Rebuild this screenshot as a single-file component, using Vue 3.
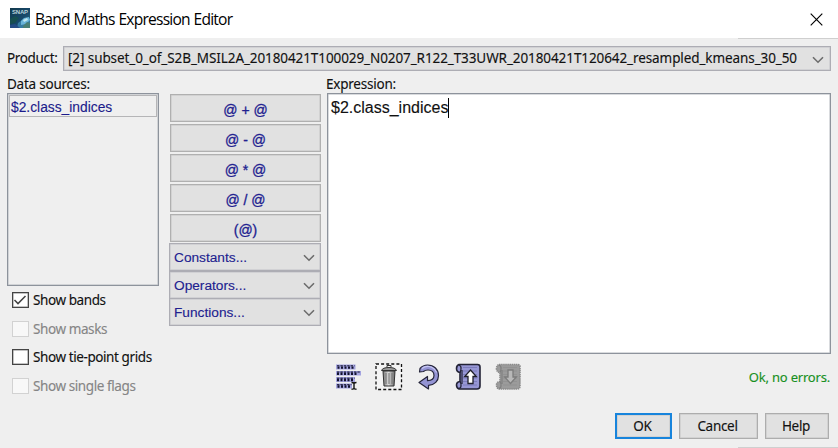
<script setup>
import { ref } from 'vue'

const product = ref('[2] subset_0_of_S2B_MSIL2A_20180421T100029_N0207_R122_T33UWR_20180421T120642_resampled_kmeans_30_50')
const expression = ref('$2.class_indices')
const operations = ['@ + @', '@ - @', '@ * @', '@ / @', '(@)']
const menus = ['Constants...', 'Operators...', 'Functions...']
const options = [
  { label: 'Show bands', checked: true, disabled: false },
  { label: 'Show masks', checked: false, disabled: true },
  { label: 'Show tie-point grids', checked: false, disabled: false },
  { label: 'Show single flags', checked: false, disabled: true },
]
</script>

<template>
  <div class="dialog">
    <header class="titlebar">
      <svg class="logo" width="20" height="20" viewBox="0 0 20 20">
        <defs>
          <linearGradient id="sky" x1="0" y1="0" x2="1" y2="1">
            <stop offset="0" stop-color="#123a4c" />
            <stop offset=".55" stop-color="#17486b" />
            <stop offset="1" stop-color="#356f80" />
          </linearGradient>
        </defs>
        <rect width="20" height="20" fill="url(#sky)" />
        <path d="M0 11l5-3 4 2-4 5-5 1z" fill="#174f50" />
        <path d="M8 15l7-5 5 1v9H7z" fill="#347ba3" />
        <path d="M11 13l3-3 5-1 1 3-4 4-5 1z" fill="#69b4d9" />
        <path d="M13 12l4-2 1 2-4 2z" fill="#c1e6ef" />
        <path d="M0 17l5-1 5 4H0z" fill="#244c85" />
        <path d="M13 18l4-4 3 1v5h-7z" fill="#487f75" />
        <text x="2" y="5.5" class="logo-text" textLength="16">SNAP</text>
      </svg>
      <h1>Band Maths Expression Editor</h1>
      <svg class="close" width="13" height="13" viewBox="0 0 13 13">
        <path d="M.7.7l11.6 11.6M12.3.7L.7 12.3" stroke="#000" stroke-width="1.15" />
      </svg>
    </header>
    <div class="top-edge"></div>

    <div class="product">
      <span class="product-label">Product:</span>
      <div class="combo product-combo">
        <span class="product-name">{{ product }}</span>
        <svg class="chevron" width="12" height="8" viewBox="0 0 12 8"><path d="M1 1.2l5 5 5-5" /></svg>
      </div>
    </div>

    <main class="columns">
      <section class="sources">
        <div class="caption">Data sources:</div>
        <div class="list"><div class="list-item">{{ expression }}</div></div>
        <div class="checks">
          <label v-for="o in options" :key="o.label" class="check" :class="{ disabled: o.disabled }">
            <span class="box">
              <svg v-if="o.checked" width="14" height="14" viewBox="0 0 14 14"><path d="M1.5 7l3.5 3.6L12.5 3" fill="none" stroke="#444" stroke-width="1.5" /></svg>
            </span>
            <span class="check-text">{{ o.label }}</span>
          </label>
        </div>
      </section>

      <section class="operators">
        <button v-for="op in operations" :key="op" class="op">{{ op }}</button>
        <div v-for="m in menus" :key="m" class="combo menu">
          <span>{{ m }}</span>
          <svg class="chevron" width="12" height="8" viewBox="0 0 12 8"><path d="M1 1.2l5 5 5-5" /></svg>
        </div>
      </section>

      <section class="editor">
        <div class="caption">Expression:</div>
        <div class="code"><span>{{ expression }}</span><i class="caret"></i></div>
        <div class="tools">
          <div class="icons">
            <svg width="28" height="28" viewBox="0 0 28 28">
              <path d="M1 1.5h19.5v5H1zM1 8h25v4.500H1zM1 14h19v5H1zM1 20.500h16v5H1z" fill="#a4a4e0" />
              <g fill="none" stroke="#11112b">
                <path d="M2 2.800h17.500M2 9h23M2 15.200h17.500M2 21.700h14.500" stroke-width="1" stroke-dasharray="2.400 1" />
                <path d="M2.500 4.600h17M2 10.800h20M2 17h17.500M2.500 23.500h14" stroke-width="2.400" stroke-dasharray="2 1.500" />
              </g>
              <path d="M16.500 19.500q2 0 2.500 1 .5-1 2.500-1M19 20.500v5M16.500 26.200q2 0 2.500-1 .5 1 2.500 1" fill="none" stroke="#111" stroke-width="1.400" />
            </svg>
            <svg width="28" height="28" viewBox="0 0 28 28">
              <defs>
                <linearGradient id="metal"><stop stop-color="#777" /><stop offset=".45" stop-color="#ddd" /><stop offset="1" stop-color="#666" /></linearGradient>
              </defs>
              <rect x="1" y="1" width="25.500" height="25.500" fill="#f4f4f4" stroke="#111" stroke-width="1.300" stroke-dasharray="3 2.100" />
              <path d="M8 8h12l-1 15H9z" fill="url(#metal)" stroke="#333" />
              <path d="M11 10v11M14 10v11M17 10v11" stroke="#777" stroke-width="1.100" />
              <path d="M6.500 7.500q1-3 7.500-3t7.500 3z" fill="#999" stroke="#333" />
              <path d="M12 4V2.500h4V4" fill="none" stroke="#333" />
            </svg>
            <svg width="28" height="28" viewBox="0 0 28 28">
              <path d="M5 5.500Q8 2 12.500 2C19 2 23.500 6.500 23.500 12.500c0 5.500-4 9.500-10 9.800V26L4 19.500l8.500-6v4.200c4-.2 6.500-2.200 6.500-5.200 0-3.500-2.500-5.500-6-5.500-2 0-3.500.5-4.500 1.500L4.500 9Z" fill="#9494d4" stroke="#25253a" stroke-width="1.200" stroke-linejoin="round" />
              <path d="M7 5.500q3-2.500 7-2 5.500 1 7.500 6" fill="none" stroke="#c7c7f3" stroke-width="1.100" />
            </svg>
            <svg v-for="dir in ['up', 'down']" :key="dir" :class="dir" width="28" height="28" viewBox="0 0 28 28">
              <path class="sheet" d="M4 1.500h18.500q2.500 0 2.500 2.500v19q0 3-3 3H4q-2.500-1-2.500-4Q1.500 19 5 18.500V9.500Q1.500 9 1.500 5.500q0-3 2.500-4z" />
              <path class="rules" d="M8 4.500h14M8 8h14M8 11.500h14M8 15h14M8 18.500h14M8 22h14" />
              <path class="rolls" d="M4 2q2.500 1 2 4-.5 3-1 3.500M4 25.500q2.500-1 2-4-.5-2.500-1-3M7 7v14" />
              <path v-if="dir === 'up'" class="arrow" d="M15.500 7l5.800 6.500H18v7h-5v-7H9.700z" />
              <path v-else class="arrow" d="M15.500 20.500l5.800-6.500H18V7h-5v7H9.700z" />
            </svg>
          </div>
          <span class="status">Ok, no errors.</span>
        </div>
      </section>
    </main>

    <footer class="actions">
      <button class="ok">OK</button>
      <button class="cancel">Cancel</button>
      <button class="help">Help</button>
    </footer>
    <div class="bottom-edge"></div>
  </div>
</template>

<style>
body { margin: 0; overflow: hidden; }
</style>

<style scoped>
* { box-sizing: border-box; }
.dialog {
  width: 838px; height: 448px; background: #efefef; display: flex; flex-direction: column;
  font: 13.5px/18px "Noto Sans", sans-serif; letter-spacing: -.23px; color: #111; white-space: nowrap; overflow: hidden;
  -webkit-text-stroke: .12px currentColor;
}
.titlebar { height: 38px; flex: none; background: #fff; display: flex; align-items: center; padding: 0 15px 0 10px; }
.top-edge, .bottom-edge { height: 1px; width: 100px; flex: none; margin-left: auto; background: #cfcfcf; }
.logo { margin-top: -2px; -webkit-text-stroke: 0; }
.logo-text { font: bold 6px "Liberation Sans", sans-serif; letter-spacing: 0; fill: #b9d2dc; }
h1 { margin: 0 auto 0 5px; font: 400 15.6px/22px "Open Sans", sans-serif; letter-spacing: -.78px; word-spacing: .4px; color: #000; -webkit-text-stroke: 0; }
.product { display: flex; align-items: center; padding: 6px 7px 0; height: 32px; flex: none; }
.product-label { width: 56px; flex: none; letter-spacing: -.35px; }
.combo { background: #e1e1e1; border: 1px solid #adadb4; box-shadow: inset 0 0 0 .5px #c2c2c8; display: flex; align-items: center; justify-content: space-between; }
.product-combo { width: 768px; height: 25px; padding: 0 6px 0 4px; }
.product-name { letter-spacing: -.09px; }
.chevron { flex: none; }
.chevron path { fill: none; stroke: #6c6c6c; stroke-width: 1.6; }
.product .chevron { margin-top: 4px; }
.columns { display: flex; height: 329px; flex: none; padding: 4px 7px 0; }
.caption { height: 18px; line-height: 19px; }
.sources { width: 162px; }
.list { width: 152px; height: 193px; border: 1px solid #8d939c; box-shadow: inset 0 0 0 .5px #b4b8be; padding: 1px; }
.list-item { width: 148px; height: 22px; border: 1px solid #b5b5b7; padding-left: 1px; line-height: 23px; color: #1b1b8b; font-family: "Liberation Sans", sans-serif; font-size: 13.8px; letter-spacing: 0; }
.checks { padding: 4px 0 0 5px; }
.check { display: flex; align-items: flex-start; height: 28.7px; padding-top: 2px; letter-spacing: -.41px; }
.box { width: 17px; height: 16px; flex: none; border: 1px solid #444; box-shadow: inset 0 0 0 .5px #888; background: #fff; margin-right: 4px; display: flex; }
.check-text { line-height: 16px; }
.disabled { color: #858585; }
.disabled .box { border-color: #d2d2d2; box-shadow: none; background: #f8f8f8; }
.operators { width: 157px; padding-top: 19px; font-family: "Liberation Sans", sans-serif; font-size: 13.7px; letter-spacing: 0; color: #20208f; }
.op { display: block; width: 151px; height: 28px; margin: 0 0 2px 1px; border: 1px solid #b0b0b0; box-shadow: inset 0 0 0 .5px #c4c4c4; background: #e1e1e1; color: #20208f; font: 14px/28px "Liberation Sans", sans-serif; padding: 1px 0 0; -webkit-text-stroke: .3px #20208f; }
.menu { width: 152px; height: 28px; margin-bottom: -.5px; padding: 2px 5px 0 4px; }
.op:nth-of-type(5) { margin-bottom: 1px; }
.editor { width: 505px; }
.code { width: 504px; margin-left: 1px; height: 261px; background: #fff; border: 1px solid #8d939c; box-shadow: inset 0 0 0 .5px #b4b8be; padding: 4px 3px; display: flex; font: 16px/20px "Liberation Sans", sans-serif; letter-spacing: 0; }
.caret { width: 1px; height: 20px; background: #000; }
.tools { display: flex; justify-content: space-between; padding: 9px 1px 0 9px; }
.icons { display: flex; gap: 12px; }
.sheet { fill: #9797d5; stroke: #222235; stroke-width: 1.6; }
.rules { fill: none; stroke: #7575b4; stroke-width: .8; }
.rolls { fill: none; stroke: #222235; stroke-width: 1.2; }
.arrow { fill: #fff; stroke: #20202a; stroke-width: 1.3; }
.down .sheet { fill: #9b9b9b; stroke: #8b8b8b; stroke-dasharray: 1.5 .6; }
.down .rules { stroke: #8f8f8f; }
.down .rolls { stroke: #808080; }
.down .arrow { fill: #b8b8b8; stroke: #7c7c7c; }
.status { color: #178f22; font-size: 13px; line-height: 28px; letter-spacing: -.2px; }
.actions { display: flex; justify-content: flex-end; gap: 7px; padding: 13px 9px 0 0; height: 47px; flex: none; }
.actions button { height: 26px; padding: 0 2px 0 0; background: #e1e1e1; border: 1px solid #adadad; box-shadow: inset 0 0 0 .5px #c4c4c4; color: #111; font: 13.5px/22px "Noto Sans", sans-serif; letter-spacing: -.3px; -webkit-text-stroke: .12px #111; }
.actions .ok { width: 57px; border: 2px solid #1784dc; }
.actions .cancel { width: 79px; }
.actions .help { width: 64px; }
</style>
